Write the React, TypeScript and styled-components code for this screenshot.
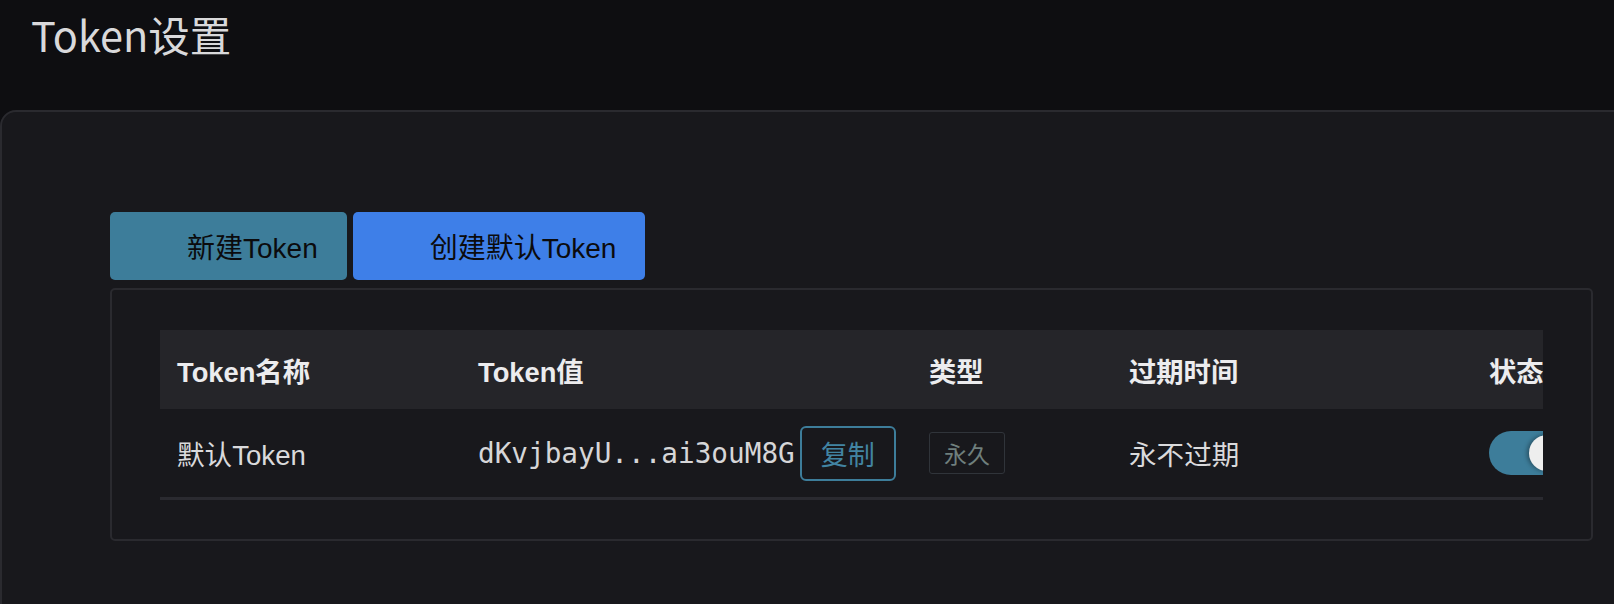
import React, {useState} from 'react';
import styled, {createGlobalStyle} from 'styled-components';

const GlobalStyle = createGlobalStyle`
  html, body {
    margin: 0;
    padding: 0;
    background: #0e0e11;
  }
  body {
    font-family: "Liberation Sans", "Noto Sans CJK SC", sans-serif;
    overflow: hidden;
  }
`;

const Page = styled.div`
  width: 1614px;
  height: 604px;
  overflow: hidden;
  background: #0e0e11;
`;

const Header = styled.div`
  height: 110px;
  box-sizing: border-box;
  padding: 8px 31px 0;
`;

const Title = styled.h1`
  margin: 0;
  font-family: "Noto Sans CJK SC", sans-serif;
  font-weight: 400;
  font-size: 41.5px;
  line-height: 52px;
  color: #d9d9db;
`;

const Card = styled.div`
  margin-right: -40px;
  min-height: 600px;
  box-sizing: border-box;
  padding: 100px 0 0 108px;
  background: #18181c;
  border: 2px solid #2a2a2f;
  border-radius: 16px 0 0 0;
`;

const Toolbar = styled.div`
  display: flex;
  gap: 6px;
  margin-bottom: 8px;
`;

const ActionButton = styled.button<{ $variant: 'teal' | 'blue' }>`
  display: flex;
  align-items: center;
  height: 68px;
  padding: 0 29px 0 0;
  border: none;
  border-radius: 5px;
  background: ${p => (p.$variant === 'teal' ? '#3d7d9a' : '#3e7fe8')};
  color: #0b0b0d;
  font-family: "Liberation Sans", "Noto Sans CJK SC", sans-serif;
  font-size: 28px;
  cursor: pointer;
`;

const IconSlot = styled.span`
  display: inline-block;
  width: 77px;
`;

const TablePanel = styled.div`
  width: 1483px;
  box-sizing: border-box;
  padding: 40px 48px 39px;
  border: 2px solid #2a2a2f;
  border-radius: 5px;
`;

const TableScroll = styled.div`
  overflow: hidden;
`;

const Table = styled.table`
  width: 1512px;
  border-collapse: collapse;
  table-layout: fixed;
`;

const HeadCell = styled.th`
  height: 79px;
  padding: 0 17px;
  background: #252529;
  color: #ececee;
  font-size: 27.3px;
  font-weight: 700;
  text-align: left;
  white-space: nowrap;
`;

const Cell = styled.td`
  height: 88px;
  padding: 0 17px;
  border-bottom: 3px solid #2a2a30;
  color: #dadadc;
  font-size: 27.6px;
  white-space: nowrap;
`;

const TokenValue = styled.div`
  display: flex;
  align-items: center;
  gap: 5px;
`;

const Mono = styled.span`
  font-family: "DejaVu Sans Mono", "Liberation Mono", monospace;
  font-size: 27.7px;
  color: #d6d6d8;
`;

const CopyButton = styled.button`
  height: 55px;
  padding: 0 19px;
  border: 2px solid #3d7d9a;
  border-radius: 6px;
  background: transparent;
  color: #4284a2;
  font-family: "Liberation Sans", "Noto Sans CJK SC", sans-serif;
  font-size: 27px;
  cursor: pointer;
`;

const Tag = styled.span`
  display: inline-flex;
  align-items: center;
  height: 42px;
  box-sizing: border-box;
  padding: 0 14px;
  border: 1px solid #30343a;
  border-radius: 3px;
  color: #6f7f7d;
  font-size: 23px;
`;

const Switch = styled.button<{ $on: boolean }>`
  position: relative;
  display: block;
  width: 80px;
  height: 44px;
  padding: 0;
  border: none;
  border-radius: 22px;
  background: ${p => (p.$on ? '#3d7d9a' : '#3a3a40')};
  cursor: pointer;
`;

const Knob = styled.span<{ $on: boolean }>`
  position: absolute;
  top: 4px;
  left: ${p => (p.$on ? '40px' : '4px')};
  width: 36px;
  height: 36px;
  border-radius: 50%;
  background: #eeeeee;
  box-shadow: -2px 0 4px rgba(0, 0, 0, 0.35);
`;

const columns = [
  {title: 'Token名称', width: 301},
  {title: 'Token值', width: 451},
  {title: '类型', width: 200},
  {title: '过期时间', width: 360},
  {title: '状态', width: 200},
];

export default function App() {
  const [enabled, setEnabled] = useState(true);
  return (
    <Page>
      <GlobalStyle/>
      <Header>
        <Title>Token设置</Title>
      </Header>
      <Card>
        <Toolbar>
          <ActionButton $variant="teal"><IconSlot/>新建Token</ActionButton>
          <ActionButton $variant="blue"><IconSlot/>创建默认Token</ActionButton>
        </Toolbar>
        <TablePanel>
          <TableScroll>
            <Table>
              <colgroup>
                {columns.map(c => <col key={c.title} style={{width: c.width}}/>)}
              </colgroup>
              <thead>
                <tr>
                  {columns.map(c => <HeadCell key={c.title}>{c.title}</HeadCell>)}
                </tr>
              </thead>
              <tbody>
                <tr>
                  <Cell>默认Token</Cell>
                  <Cell>
                    <TokenValue>
                      <Mono>dKvjbayU...ai3ouM8G</Mono>
                      <CopyButton>复制</CopyButton>
                    </TokenValue>
                  </Cell>
                  <Cell><Tag>永久</Tag></Cell>
                  <Cell>永不过期</Cell>
                  <Cell>
                    <Switch $on={enabled} onClick={() => setEnabled(!enabled)}>
                      <Knob $on={enabled}/>
                    </Switch>
                  </Cell>
                </tr>
              </tbody>
            </Table>
          </TableScroll>
        </TablePanel>
      </Card>
    </Page>
  );
}
